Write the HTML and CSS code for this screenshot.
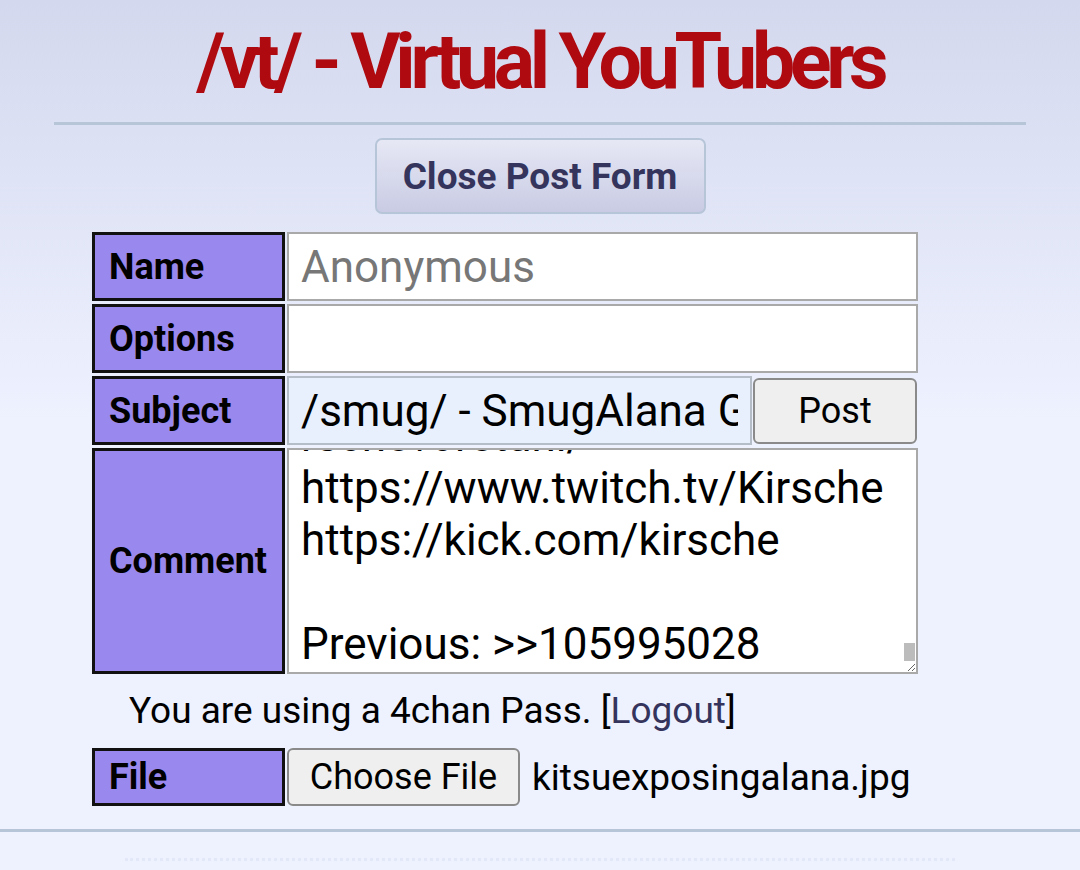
FILE: index.html
```html
<!DOCTYPE html>
<html lang="en">
<head>
  <meta charset="UTF-8" />
  <meta name="viewport" content="width=device-width, initial-scale=1.0"/>
  <title>/vt/ - Virtual YouTubers</title>
  <link rel="stylesheet" href="styles.css">
</head>
<body>

  <h1 class="board-title">/vt/ - Virtual YouTubers</h1>
  <hr class="divider">

  <div class="toggle-wrap">
    <button class="toggle-form" type="button">Close Post Form</button>
  </div>

  <form class="post-form">
    <table class="form-table">
      <tr>
        <td class="label">Name</td>
        <td class="field"><input type="text" placeholder="Anonymous"></td>
      </tr>
      <tr>
        <td class="label">Options</td>
        <td class="field"><input type="text"></td>
      </tr>
      <tr>
        <td class="label">Subject</td>
        <td class="field subject-row">
          <input type="text" class="autofilled" value="/smug/ - SmugAlana General">
          <button type="button" class="post-btn">Post</button>
        </td>
      </tr>
      <tr>
        <td class="label">Comment</td>
        <td class="field">
          <div class="comment-wrap">
            <textarea id="comment">/smug/ - SmugAlana General
Thread for Alana and her smug friends.

Streams:
https://www.youtube.com/@kirschevoretuni/
https://www.twitch.tv/Kirsche
https://kick.com/kirsche

Previous: >>105995028</textarea>
            <span class="scroll-thumb"></span>
          </div>
        </td>
      </tr>
    </table>

    <p class="pass-note">You are using a 4chan Pass. [<a href="#">Logout</a>]</p>

    <table class="form-table file-table">
      <tr>
        <td class="label file-label">File</td>
        <td class="field file-field">
          <button type="button" class="file-btn">Choose File</button>
          <span class="file-name">kitsuexposingalana.jpg</span>
        </td>
      </tr>
    </table>
  </form>

  <hr class="divider full">
  <div class="dots"></div>

  <script>
    // Keep the comment scrolled to the bottom like the screenshot
    const comment = document.getElementById("comment");
    comment.scrollTop = comment.scrollHeight;
  </script>
</body>
</html>
```

FILE: styles.css
```css
body {
  margin: 0;
  min-height: 870px;
  font-family: Roboto, "Noto Sans", sans-serif;
  background: linear-gradient(#d3d8ee 0, #eef2ff 420px, #eef2ff 100%);
  color: #000;
}

.board-title {
  margin: 17px 0 0;
  text-align: center;
  font-size: 77px;
  line-height: 90px;
  font-weight: bold;
  letter-spacing: -5.3px;
  color: #af0a0f;
}

.divider {
  border: none;
  border-top: 3px solid #b7c5d9;
  margin: 15px 54px 0;
}

.divider.full {
  margin: 20px 0 0;
}

.toggle-wrap {
  display: flex;
  justify-content: center;
  margin-top: 13px;
}

.toggle-form {
  width: 331px;
  height: 76px;
  font-family: Roboto, sans-serif;
  font-size: 37px;
  font-weight: bold;
  color: #34345c;
  background: linear-gradient(#e6e8f5, #c9cbe4);
  border: 2px solid #b7c5d9;
  border-radius: 7px;
}

.post-form {
  margin: 15px 0 0 90px;
}

.form-table {
  border-collapse: separate;
  border-spacing: 2px 3px;
}

.label {
  width: 173px;
  padding: 0 0 0 14px;
  background-color: #9988ee;
  border: 3px solid #111;
  font-size: 36px;
  font-weight: bold;
}

.field {
  width: 631px;
  padding: 0;
}

.field input {
  box-sizing: border-box;
  width: 100%;
  height: 69px;
  margin: 0;
  padding: 0 12px;
  font-family: Roboto, sans-serif;
  font-size: 44px;
  border: 2px solid #a9a9a9;
  background: #fff;
}

.field input::placeholder {
  color: #777;
}

.subject-row {
  display: flex;
  gap: 1px;
  align-items: center;
}

.field input.autofilled {
  width: 465px;
  flex: none;
  background-color: #e8f0fe;
  border-color: #b5bdc8;
}

.post-btn,
.file-btn {
  font-family: Roboto, sans-serif;
  font-size: 36px;
  background-color: #efefef;
  border: 2px solid #8a8a8a;
  border-radius: 6px;
  color: #000;
}

.post-btn {
  width: 164px;
  height: 66px;
}

.comment-wrap {
  position: relative;
  height: 226px;
}

.comment-wrap textarea {
  box-sizing: border-box;
  width: 100%;
  height: 226px;
  margin: 0;
  padding: 2px 12px;
  font-family: Roboto, sans-serif;
  font-size: 44px;
  line-height: 52px;
  border: 2px solid #a9a9a9;
  background: #fff;
  resize: both;
  scrollbar-width: none;
  display: block;
}

.comment-wrap textarea::-webkit-scrollbar {
  display: none;
}

.scroll-thumb {
  position: absolute;
  right: 3px;
  bottom: 13px;
  width: 11px;
  height: 18px;
  background: #bcbcbc;
}

.pass-note {
  margin: 12px 0 0 39px;
  font-size: 37px;
}

.pass-note a {
  color: #34345c;
  text-decoration: none;
}

.file-table {
  margin-top: 13px;
}

.file-label {
  height: 52px;
}

.file-field {
  display: flex;
  align-items: center;
  gap: 12px;
}

.file-btn {
  width: 233px;
  height: 58px;
}

.file-name {
  font-size: 37px;
}

.dots {
  margin: 26px 125px 0;
  border-top: 3px dotted #e2e8f8;
}
```
